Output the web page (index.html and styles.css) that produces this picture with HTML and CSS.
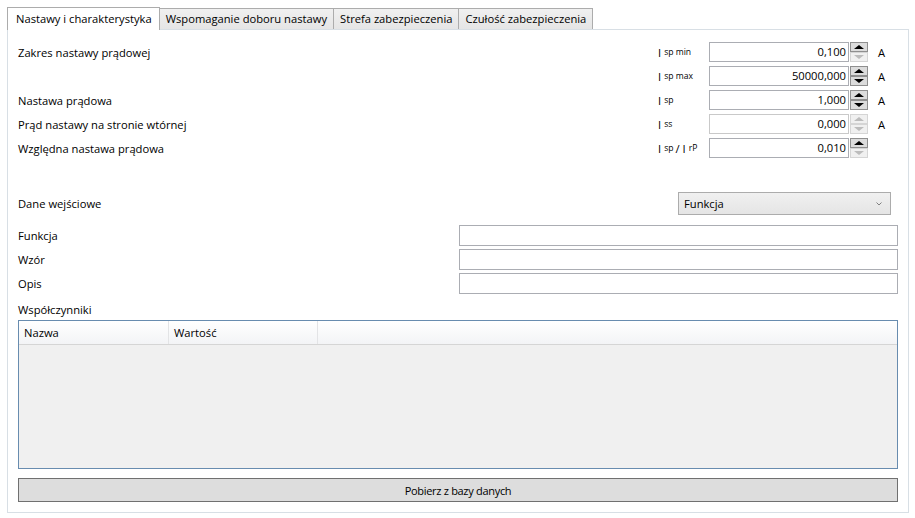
FILE: index.html
```html
<!DOCTYPE html>
<html lang="pl">
  <head>
    <meta charset="utf-8">
    <title>Nastawy i charakterystyka</title>
    <link rel="stylesheet" href="styles.css">
  </head>
  <body>
    <div class="tabs">
      <div class="tab active">Nastawy i charakterystyka</div>
      <div class="tab">Wspomaganie doboru nastawy</div>
      <div class="tab">Strefa zabezpieczenia</div>
      <div class="tab">Czułość zabezpieczenia</div>
    </div>
    <div class="panel">
      <div class="settings">
        <div class="lbl">Zakres nastawy prądowej</div>
        <div class="sym">I <small>sp min</small></div>
        <div class="num"><span class="val">0,100</span><span class="spin"><i class="up"></i><i class="down off"></i></span></div>
        <div class="unit">A</div>

        <div class="lbl"></div>
        <div class="sym">I <small>sp max</small></div>
        <div class="num"><span class="val">50000,000</span><span class="spin"><i class="up"></i><i class="down"></i></span></div>
        <div class="unit">A</div>

        <div class="lbl">Nastawa prądowa</div>
        <div class="sym">I <small>sp</small></div>
        <div class="num"><span class="val">1,000</span><span class="spin"><i class="up"></i><i class="down"></i></span></div>
        <div class="unit">A</div>

        <div class="lbl">Prąd nastawy na stronie wtórnej</div>
        <div class="sym">I <small>ss</small></div>
        <div class="num disabled"><span class="val">0,000</span><span class="spin"><i class="up off"></i><i class="down off"></i></span></div>
        <div class="unit">A</div>

        <div class="lbl">Względna nastawa prądowa</div>
        <div class="sym">I <small>sp</small> / I <small>rP</small></div>
        <div class="num"><span class="val">0,010</span><span class="spin"><i class="up"></i><i class="down off"></i></span></div>
        <div class="unit"></div>
      </div>

      <div class="source-row">
        <span>Dane wejściowe</span>
        <div class="combo">Funkcja<svg width="6" height="4" viewBox="0 0 6 4"><path d="M0.5 0.5 L3 3 L5.5 0.5" fill="none" stroke="#808080" stroke-width="1"/></svg></div>
      </div>

      <div class="field"><span>Funkcja</span><div class="textbox"></div></div>
      <div class="field"><span>Wzór</span><div class="textbox"></div></div>
      <div class="field"><span>Opis</span><div class="textbox"></div></div>

      <div class="coef-label">Współczynniki</div>
      <div class="datagrid">
        <div class="grid-head">
          <div class="col name">Nazwa</div>
          <div class="col value">Wartość</div>
          <div class="col rest"></div>
        </div>
        <div class="grid-body"></div>
      </div>

      <button type="button" class="fetch">Pobierz z bazy danych</button>
    </div>
  </body>
</html>
```

FILE: styles.css
```css
html, body {
  margin: 0;
  padding: 0;
  background-color: #ffffff;
}

body {
  padding: 7px 6px 0 7px;
  font-family: "Open Sans", "Noto Sans", sans-serif;
  font-size: 11.2px;
  color: #000;
}

.tabs {
  display: flex;
  align-items: flex-end;
  height: 23px;
  position: relative;
  z-index: 1;
  margin-bottom: -1px;
}

.tab {
  box-sizing: border-box;
  height: 21px;
  line-height: 19px;
  padding: 0 6px;
  margin-bottom: 1px;
  border: 1px solid #acacac;
  border-bottom: none;
  border-left: none;
  background: linear-gradient(#f0f0f0, #e5e5e5);
  white-space: nowrap;
}

.tab.active {
  height: 23px;
  line-height: 21px;
  padding: 0 7px 0 8px;
  margin-bottom: 0;
  border-left: 1px solid #acacac;
  background: #fff;
}

.panel {
  box-sizing: border-box;
  height: 484px;
  border: 1px solid #d8dfe5;
  padding: 12px 10px 10px 10px;
  display: flex;
  flex-direction: column;
}

/* numeric settings */
.settings {
  display: grid;
  grid-template-columns: 1fr 51px 159px 30px;
  grid-auto-rows: 20px;
  row-gap: 4px;
}

.lbl, .sym, .unit {
  display: flex;
  align-items: center;
  white-space: nowrap;
}

.sym small {
  font-size: 8.6px;
  margin: 0 2px 0 3px;
}

.unit {
  padding-left: 10px;
}

.num {
  display: flex;
}

.val {
  box-sizing: border-box;
  flex: 1;
  border: 1px solid #abadb3;
  text-align: right;
  padding-right: 2px;
  line-height: 18px;
}

.num.disabled .val {
  border-color: #c9c9c9;
}

.spin {
  width: 18px;
  display: flex;
  flex-direction: column;
  padding-left: 1px;
}

.spin i {
  box-sizing: border-box;
  height: 10px;
  border: 1px solid #8f8f8f;
  background: #dcdcdc;
  display: flex;
  align-items: center;
  justify-content: center;
}

.spin i::after {
  content: "";
  border-left: 5px solid transparent;
  border-right: 5px solid transparent;
}

.spin .up::after {
  border-bottom: 4px solid #000;
}

.spin .down::after {
  border-top: 4px solid #000;
}

.spin i.off {
  border-color: #d5d5d5;
  background: #f0f0f0;
}

.spin .up.off::after {
  border-bottom-color: #bcbcbc;
}

.spin .down.off::after {
  border-top-color: #bcbcbc;
}

/* input data */
.source-row {
  margin-top: 34px;
  display: flex;
  justify-content: space-between;
  align-items: center;
  height: 23px;
  margin-bottom: 10px;
}

.combo {
  box-sizing: border-box;
  width: 213px;
  height: 23px;
  margin-right: 7px;
  border: 1px solid #acacac;
  background: linear-gradient(#f0f0f0, #e5e5e5);
  display: flex;
  justify-content: space-between;
  align-items: center;
  padding: 0 8px 0 5px;
}

.field {
  display: flex;
  align-items: center;
  height: 21px;
  margin-bottom: 3px;
}

.field span {
  width: 441px;
}

.textbox {
  box-sizing: border-box;
  flex: 1;
  height: 21px;
  border: 1px solid #abadb3;
}

.coef-label {
  margin-top: 3px;
  height: 20px;
  line-height: 20px;
}

.datagrid {
  box-sizing: border-box;
  height: 150px;
  border: 1px solid #688caf;
  background: #f0f0f0;
  display: flex;
  flex-direction: column;
}

.grid-head {
  display: flex;
  height: 23px;
  border-bottom: 1px solid #d5d5d5;
  background: linear-gradient(#ffffff, #f3f4f6);
}

.grid-head .col {
  box-sizing: border-box;
  padding-left: 5px;
  line-height: 23px;
  border-right: 1px solid #e3e4e6;
}

.grid-head .name {
  width: 150px;
}

.grid-head .value {
  width: 149px;
}

.grid-head .rest {
  flex: 1;
  border-right: none;
}

.fetch {
  margin-top: 9px;
  height: 24px;
  border: 1px solid #707070;
  background: #dddddd;
  font-family: "Open Sans", "Noto Sans", sans-serif;
  font-size: 11px;
  letter-spacing: -0.3px;
  color: #000;
  padding: 0;
}
```
